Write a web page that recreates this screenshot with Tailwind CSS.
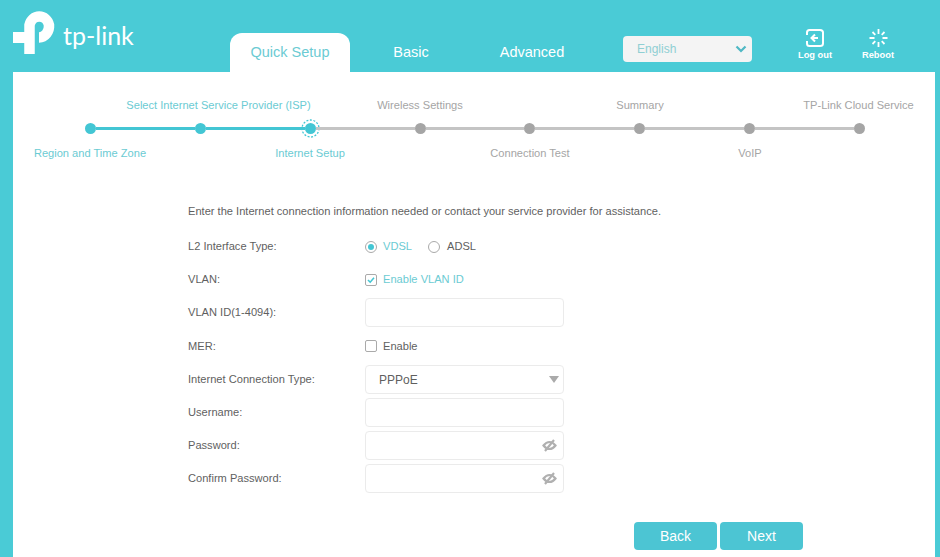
<!DOCTYPE html>
<html lang="en">
<head>
    <meta charset="UTF-8">
    <title>Quick Setup</title>
    <script src="https://cdn.jsdelivr.net/npm/@tailwindcss/browser@4"></script>
</head>
<body class="h-[557px] w-[940px] overflow-hidden bg-[#4acbd6] font-['Liberation_Sans',Arial,sans-serif] text-[11.1px] text-[#5f5f5f]">
    <!-- Header -->
    <header class="flex h-[72px]">
        <div class="ml-[13px] mt-[9px] flex h-[46px] w-[120px] shrink-0">
            <svg class="h-[46px] w-[42px] shrink-0" viewBox="0 0 42 46" fill="none" stroke="#fff">
                <path d="M16.5 45V16A10 11 0 0 1 36 16A10 11.5 0 0 1 26 28.5" stroke-width="10.5"/>
                <path d="M0 28.5H20" stroke-width="11"/>
            </svg>
            <span class="ml-[8px] mt-[11px] whitespace-nowrap font-['Lato',sans-serif] text-[25px] leading-[30px] text-white">tp-link</span>
        </div>
        <nav class="ml-[97px] flex items-end text-[14.5px]">
            <a class="flex h-[39px] w-[120px] items-center justify-center rounded-t-xl bg-white text-[#6bcbd3]">Quick Setup</a>
            <a class="flex h-[39px] w-[122px] items-center justify-center text-white">Basic</a>
            <a class="flex h-[39px] w-[120px] items-center justify-center text-white">Advanced</a>
        </nav>
        <div class="ml-[31px] mt-[36px] flex h-[26px] w-[129px] items-center justify-between rounded-[4px] bg-[#f4f4f4] pl-[14px] pr-[5px] text-[#8fcfd3]">
            <span class="text-xs">English</span>
            <svg class="h-[10px] w-[12px]" viewBox="0 0 12 10" fill="none" stroke="#4fb8c4" stroke-width="2.2"><path d="M1.5 2.5L6 7L10.5 2.5"/></svg>
        </div>
        <div class="ml-[43px] mt-[29px] flex w-[40px] flex-col items-center text-[9.3px] font-bold text-white">
            <svg class="h-[18px] w-[18px]" viewBox="0 0 18 18" fill="none" stroke="#fff" stroke-width="2"><path d="M1 3.5C1 2 2 1 3.5 1H14C16 1 17 2 17 3.5V14.5C17 16 16 17 14 17H3.5C2 17 1 16 1 14.5V12M1 6V3.5"/><path d="M9 5.5L5.5 9L9 12.5M5.5 9H12"/></svg>
            <span class="mt-[2px] whitespace-nowrap">Log out</span>
        </div>
        <div class="ml-[23px] mt-[29px] flex w-[40px] flex-col items-center text-[9.3px] font-bold text-white">
            <svg class="h-[18px] w-[19px]" viewBox="0 0 19 18" fill="none" stroke="#fff" stroke-width="1.8"><path d="M9.5 0V5M9.5 13V18M0.5 9H5.5M13.5 9H18.5M3.5 3L6.3 5.8M12.7 12.2L15.5 15M15.5 3L12.7 5.8M6.3 12.2L3.5 15"/></svg>
            <span class="mt-[2px]">Reboot</span>
        </div>
    </header>

    <!-- Panel -->
    <main class="ml-[13px] h-[485px] w-[922px] bg-white pt-[25px]">
        <!-- Stepper -->
        <div class="ml-[22px] grid w-[880px] grid-cols-8 text-[#6bcbd3]">
            <div class="h-[14px]"></div>
            <div class="flex justify-center"><span class="ml-[37px] whitespace-nowrap">Select Internet Service Provider (ISP)</span></div>
            <div></div>
            <div class="flex justify-center"><span class="whitespace-nowrap text-[#a5a5a5]">Wireless Settings</span></div>
            <div></div>
            <div class="flex justify-center"><span class="whitespace-nowrap text-[#a5a5a5]">Summary</span></div>
            <div></div>
            <div class="flex justify-center"><span class="mr-[3px] whitespace-nowrap text-[#a5a5a5]">TP-Link Cloud Service</span></div>
        </div>
        <div class="ml-[72px] mt-[5px] flex h-[20px] w-[780px] items-center">
            <span class="h-[11px] w-[11px] shrink-0 rounded-full bg-[#43c6d4]"></span>
            <span class="h-[3px] flex-1 bg-[#43c6d4]"></span>
            <span class="h-[11px] w-[11px] shrink-0 rounded-full bg-[#43c6d4]"></span>
            <span class="h-[3px] flex-1 bg-[#43c6d4]"></span>
            <svg class="-mx-1 h-[19px] w-[19px] shrink-0" viewBox="0 0 19 19"><circle cx="9.5" cy="9.5" r="5.5" fill="#43c6d4"/><circle cx="9.5" cy="9.5" r="8.5" fill="none" stroke="#43c6d4" stroke-width="1.3" stroke-dasharray="2 1.56"/></svg>
            <span class="h-[3px] flex-1 bg-[#c4c4c4]"></span>
            <span class="h-[11px] w-[11px] shrink-0 rounded-full bg-[#a5a5a5]"></span>
            <span class="h-[3px] flex-1 bg-[#c4c4c4]"></span>
            <span class="h-[11px] w-[11px] shrink-0 rounded-full bg-[#a5a5a5]"></span>
            <span class="h-[3px] flex-1 bg-[#c4c4c4]"></span>
            <span class="h-[11px] w-[11px] shrink-0 rounded-full bg-[#a5a5a5]"></span>
            <span class="h-[3px] flex-1 bg-[#c4c4c4]"></span>
            <span class="h-[11px] w-[11px] shrink-0 rounded-full bg-[#a5a5a5]"></span>
            <span class="h-[3px] flex-1 bg-[#c4c4c4]"></span>
            <span class="h-[11px] w-[11px] shrink-0 rounded-full bg-[#a5a5a5]"></span>
        </div>
        <div class="ml-[22px] mt-[6px] grid w-[880px] grid-cols-8 text-[#6bcbd3]">
            <div class="flex h-[14px] justify-center"><span class="whitespace-nowrap">Region and Time Zone</span></div>
            <div></div>
            <div class="flex justify-center"><span class="whitespace-nowrap">Internet Setup</span></div>
            <div></div>
            <div class="flex justify-center"><span class="whitespace-nowrap text-[#a5a5a5]">Connection Test</span></div>
            <div></div>
            <div class="flex justify-center"><span class="whitespace-nowrap text-[#a5a5a5]">VoIP</span></div>
            <div></div>
        </div>

        <!-- Form -->
        <form class="ml-[175px] mt-[42px] w-[700px]">
            <p class="h-[14px]">Enter the Internet connection information needed or contact your service provider for assistance.</p>
            <div class="mt-[13px] flex h-[33px] items-center">
                <label class="w-[177px]">L2 Interface Type:</label>
                <span class="flex h-[12px] w-[12px] items-center justify-center rounded-full border border-[#aaa]"><span class="h-[6px] w-[6px] rounded-full bg-[#43c6d4]"></span></span>
                <span class="ml-[6px] text-[#6bcbd3]">VDSL</span>
                <span class="ml-[16px] h-[12px] w-[12px] rounded-full border border-[#aaa]"></span>
                <span class="ml-[7px]">ADSL</span>
            </div>
            <div class="flex h-[33px] items-center">
                <label class="w-[177px]">VLAN:</label>
                <span class="flex h-[12px] w-[12px] items-center justify-center rounded-[2px] border border-[#aaa]">
                    <svg class="h-[8px] w-[8px]" viewBox="0 0 8 8" fill="none" stroke="#43c6d4" stroke-width="1.6"><path d="M1 4L3.2 6.2L7 1.8"/></svg>
                </span>
                <span class="ml-[6px] text-[#6bcbd3]">Enable VLAN ID</span>
            </div>
            <div class="flex h-[33px] items-center">
                <label class="w-[177px]">VLAN ID(1-4094):</label>
                <input type="text" class="h-[29px] w-[199px] rounded-[4px] border border-[#ebebeb]">
            </div>
            <div class="flex h-[34px] items-center">
                <label class="w-[177px]">MER:</label>
                <span class="h-[12px] w-[12px] rounded-[2px] border border-[#aaa]"></span>
                <span class="ml-[6px]">Enable</span>
            </div>
            <div class="flex h-[33px] items-center">
                <label class="w-[177px]">Internet Connection Type:</label>
                <div class="flex h-[29px] w-[199px] items-center justify-between rounded-[4px] border border-[#ebebeb] pl-[13px] pr-[4px] text-xs">
                    <span>PPPoE</span>
                    <span class="h-0 w-0 border-x-[5px] border-t-[7px] border-x-transparent border-t-[#aaa]"></span>
                </div>
            </div>
            <div class="flex h-[33px] items-center">
                <label class="w-[177px]">Username:</label>
                <input type="text" class="h-[29px] w-[199px] rounded-[4px] border border-[#ebebeb]">
            </div>
            <div class="flex h-[33px] items-center">
                <label class="w-[177px]">Password:</label>
                <div class="flex h-[29px] w-[199px] items-center justify-end rounded-[4px] border border-[#ebebeb] pr-[6px]">
                    <svg class="h-[13px] w-[15px]" viewBox="0 0 15 13" fill="none" stroke="#b0b0b0" stroke-width="2.2"><path d="M1.5 6.5C3.5 4 5 3 7.5 3C10 3 11.5 4 13.5 6.5C11.5 9 10 10 7.5 10C5 10 3.5 9 1.5 6.5Z"/><path d="M12 1L3 12"/></svg>
                </div>
            </div>
            <div class="flex h-[33px] items-center">
                <label class="w-[177px]">Confirm Password:</label>
                <div class="flex h-[29px] w-[199px] items-center justify-end rounded-[4px] border border-[#ebebeb] pr-[6px]">
                    <svg class="h-[13px] w-[15px]" viewBox="0 0 15 13" fill="none" stroke="#b0b0b0" stroke-width="2.2"><path d="M1.5 6.5C3.5 4 5 3 7.5 3C10 3 11.5 4 13.5 6.5C11.5 9 10 10 7.5 10C5 10 3.5 9 1.5 6.5Z"/><path d="M12 1L3 12"/></svg>
                </div>
            </div>
            <div class="ml-[446px] mt-[27px] flex gap-[3px]">
                <button type="button" class="h-[28px] w-[83px] rounded-[4px] bg-[#4cc5d3] text-sm text-white">Back</button>
                <button type="button" class="h-[28px] w-[83px] rounded-[4px] bg-[#4cc5d3] text-sm text-white">Next</button>
            </div>
        </form>
    </main>
</body>
</html>
